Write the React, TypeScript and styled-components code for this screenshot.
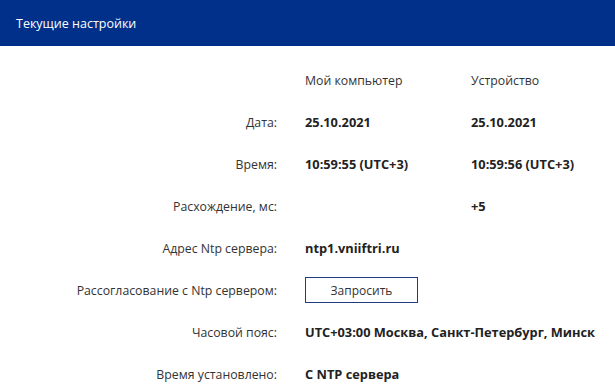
import styled, { createGlobalStyle } from "styled-components";

interface SettingRow {
  label: string;
  computer?: string;
  device?: string;
  action?: string;
  wide?: boolean;
}

const rows: SettingRow[] = [
  { label: "Дата:", computer: "25.10.2021", device: "25.10.2021" },
  { label: "Время:", computer: "10:59:55 (UTC+3)", device: "10:59:56 (UTC+3)" },
  { label: "Расхождение, мс:", device: "+5" },
  { label: "Адрес Ntp сервера:", computer: "ntp1.vniiftri.ru", wide: true },
  { label: "Рассогласование с Ntp сервером:", action: "Запросить" },
  {
    label: "Часовой пояс:",
    computer: "UTC+03:00 Москва, Санкт-Петербург, Минск",
    wide: true,
  },
  { label: "Время установлено:", computer: "С NTP сервера", wide: true },
];

const GlobalStyle = createGlobalStyle`
  html, body {
    margin: 0;
    padding: 0;
    background: #ffffff;
  }
  body {
    font-family: "Open Sans", "Noto Sans", Arial, sans-serif;
    font-size: 12.3px;
    color: #333333;
  }
`;

const App = () => {
  return (
    <Panel>
      <GlobalStyle />
      <Header>Текущие настройки</Header>
      <Table>
        <Label />
        <ColumnTitle>Мой компьютер</ColumnTitle>
        <ColumnTitle>Устройство</ColumnTitle>
        {rows.map((row) => (
          <Row key={row.label} row={row} />
        ))}
      </Table>
    </Panel>
  );
};

const Row = ({ row }: { row: SettingRow }) => {
  return (
    <>
      <Label>{row.label}</Label>
      {row.action ? (
        <Cell $wide>
          <RequestButton type="button">{row.action}</RequestButton>
        </Cell>
      ) : row.wide ? (
        <Value $wide>{row.computer}</Value>
      ) : (
        <>
          <Value>{row.computer ?? ""}</Value>
          <Value>{row.device ?? ""}</Value>
        </>
      )}
    </>
  );
};

const Panel = styled.section`
  width: 615px;
  min-height: 388px;
`;

const Header = styled.header`
  height: 46px;
  background: #00308a;
  color: #ffffff;
  display: flex;
  align-items: center;
  padding: 0 16px;
  box-sizing: border-box;
  font-size: 12.5px;
`;

const Table = styled.div`
  display: grid;
  grid-template-columns: 305px 166px 1fr;
  grid-auto-rows: 42px;
  padding-top: 13px;
`;

const Label = styled.div`
  display: flex;
  align-items: center;
  justify-content: flex-end;
  padding-right: 28px;
  color: #333333;
  white-space: nowrap;
`;

const ColumnTitle = styled.div`
  display: flex;
  align-items: center;
  color: #333333;
`;

const Value = styled.div<{ $wide?: boolean }>`
  display: flex;
  align-items: center;
  font-size: 12.8px;
  font-weight: 700;
  color: #222222;
  white-space: nowrap;
  ${({ $wide }) => ($wide ? "grid-column: 2 / 4;" : "")}
`;

const Cell = styled.div<{ $wide?: boolean }>`
  display: flex;
  align-items: center;
  ${({ $wide }) => ($wide ? "grid-column: 2 / 4;" : "")}
`;

const RequestButton = styled.button`
  width: 113px;
  height: 26px;
  background: #ffffff;
  border: 1px solid #1f3c80;
  font-family: inherit;
  font-size: 12px;
  color: #333333;
  padding: 0;
  cursor: pointer;
`;

export default App;
